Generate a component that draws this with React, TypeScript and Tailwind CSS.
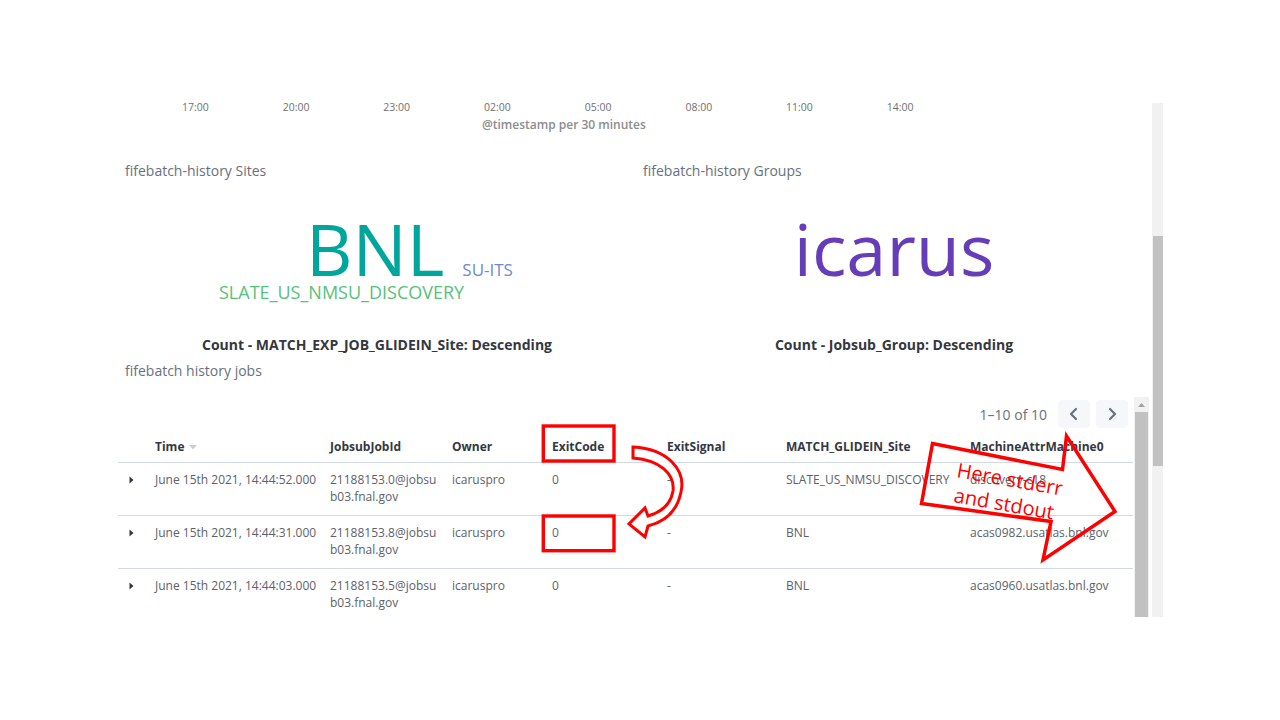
const ticks = ["17:00", "20:00", "23:00", "02:00", "05:00", "08:00", "11:00", "14:00"];

const rows = [
  {
    time: "June 15th 2021, 14:44:52.000",
    id: ["21188153.0@jobsu", "b03.fnal.gov"],
    owner: "icaruspro",
    code: "0",
    signal: "-",
    site: "SLATE_US_NMSU_DISCOVERY",
    machine: "discovery-c18",
  },
  {
    time: "June 15th 2021, 14:44:31.000",
    id: ["21188153.8@jobsu", "b03.fnal.gov"],
    owner: "icaruspro",
    code: "0",
    signal: "-",
    site: "BNL",
    machine: "acas0982.usatlas.bnl.gov",
  },
  {
    time: "June 15th 2021, 14:44:03.000",
    id: ["21188153.5@jobsu", "b03.fnal.gov"],
    owner: "icaruspro",
    code: "0",
    signal: "-",
    site: "BNL",
    machine: "acas0960.usatlas.bnl.gov",
  },
];

function Chevron({ dir }: { dir: "left" | "right" }) {
  return (
    <svg width="12" height="14" viewBox="0 0 12 14" fill="none">
      <path
        d={dir === "left" ? "M8 2 L3 7 L8 12" : "M4 2 L9 7 L4 12"}
        stroke="#69707d"
        strokeWidth="2.2"
        strokeLinecap="round"
        strokeLinejoin="round"
      />
    </svg>
  );
}

function Annotations() {
  return (
    <svg
      className="pointer-events-none absolute inset-0"
      width="1280"
      height="720"
      viewBox="0 0 1280 720"
    >
      {/* boxes around the exit codes */}
      <rect x="543.3" y="426" width="70.7" height="35" fill="none" stroke="#ff0000" strokeWidth="3.4" />
      <rect x="543.3" y="516" width="70.7" height="34.7" fill="none" stroke="#ff0000" strokeWidth="3.4" />

      {/* curved arrow from header to value */}
      <path
        d="M633 447 C668 449 686 470 681 492 C677 512 664 522 648 526 L645 537 L629 524 L645 508 L648 516 C662 512 671 503 673 491 C675 474 660 460 633 458 Z"
        fill="#ffffff"
        stroke="#ff0000"
        strokeWidth="3"
        strokeLinejoin="miter"
      />

      {/* big block arrow */}
      <polygon
        points="932.5,443.5 1062.5,469.5 1066.5,436 1115,511.5 1043,560 1051,521.5 921.5,503.5"
        fill="none"
        stroke="#ff0000"
        strokeWidth="3.5"
        strokeLinejoin="miter"
      />
      <g fill="#ff0000" fontFamily="'Open Sans', sans-serif" fontSize="20">
        <text x="956" y="477" transform="rotate(10 956 477)">Here stderr</text>
        <text x="953" y="502" transform="rotate(10 953 502)">and stdout</text>
      </g>
    </svg>
  );
}

export default function App() {
  return (
    <div className="relative h-[720px] w-[1280px] overflow-hidden bg-white font-['Open_Sans',sans-serif]">
      <div className="flex pl-[118px] pt-[97px]">
        <div className="h-[520px] w-[1034px] overflow-hidden">
          {/* histogram x axis */}
          <div className="flex h-[20px] pl-[27px] text-[10.5px] leading-[20px] text-[#707070]">
            {ticks.map((t) => (
              <div key={t} className="w-[100.7px] text-center">
                {t}
              </div>
            ))}
          </div>
          <div className="h-[16px] pl-[364px] text-[12px] font-semibold leading-[16px] text-[#8c8c8c]">
            @timestamp per 30 minutes
          </div>

          {/* tag clouds */}
          <div className="mt-[28px] flex">
            <section className="w-[518px]">
              <h3 className="pl-[7px] text-[14px] leading-[20px] text-[#69707d]">fifebatch-history Sites</h3>
              <div className="mt-[35px] flex items-baseline pl-[188px]">
                <span className="text-[72px] leading-[64px] text-[#00a69b]">BNL</span>
                <span className="ml-[18px] text-[17px] leading-[20px] text-[#6f87d8]">SU-ITS</span>
              </div>
              <div className="mt-[2px] pl-[101px] text-[18px] leading-[20px] text-[#57c17b]">
                SLATE_US_NMSU_DISCOVERY
              </div>
              <div className="mt-[33px] text-center text-[14px] font-bold leading-[20px] text-[#343741]">
                Count - MATCH_EXP_JOB_GLIDEIN_Site: Descending
              </div>
            </section>
            <section className="w-[516px]">
              <h3 className="pl-[7px] text-[14px] leading-[20px] text-[#69707d]">fifebatch-history Groups</h3>
              <div className="mt-[35px] text-center text-[72px] leading-[64px] text-[#663db8]">icarus</div>
              <div className="h-[22px]" />
              <div className="mt-[33px] text-center text-[14px] font-bold leading-[20px] text-[#343741]">
                Count - Jobsub_Group: Descending
              </div>
            </section>
          </div>

          <h3 className="mt-[6px] pl-[7px] text-[14px] leading-[20px] text-[#69707d]">fifebatch history jobs</h3>

          {/* saved search table */}
          <div className="mt-[16px] flex h-[220px]">
            <div className="w-[1015px] overflow-hidden">
              <div className="mt-[3px] flex h-[28px] items-center justify-end pr-[5px]">
                <span className="mr-[11px] text-[14px] text-[#69707d]">1–10 of 10</span>
                <button className="flex h-[28px] w-[32px] items-center justify-center rounded bg-[#f5f7fa]">
                  <Chevron dir="left" />
                </button>
                <button className="ml-[6px] flex h-[28px] w-[32px] items-center justify-center rounded bg-[#f5f7fa]">
                  <Chevron dir="right" />
                </button>
              </div>

              <div className="flex h-[35px] items-center border-b border-[#d3dae6] pt-[3px] text-[12px] font-bold text-[#343741]">
                <div className="w-[29px]" />
                <div className="flex w-[175px] items-center px-2">
                  Time
                  <svg className="ml-[5px] mt-[2px]" width="8" height="5" viewBox="0 0 8 5">
                    <path d="M0 0 L8 0 L4 4.5 Z" fill="#c9ced6" />
                  </svg>
                </div>
                <div className="w-[122px] px-2">JobsubJobId</div>
                <div className="w-[100px] px-2">Owner</div>
                <div className="w-[115px] px-2">ExitCode</div>
                <div className="w-[119px] px-2">ExitSignal</div>
                <div className="w-[184px] px-2">MATCH_GLIDEIN_Site</div>
                <div className="w-[171px] px-2">MachineAttrMachine0</div>
              </div>

              {rows.map((r) => (
                <div
                  key={r.time}
                  className="flex border-b border-[#d3dae6] pb-[10px] pt-[8px] text-[12px] leading-[17px] text-[#5c616b]"
                >
                  <div className="w-[29px] pl-[11px] pt-[5px]">
                    <svg width="5" height="8" viewBox="0 0 5 8">
                      <path d="M0.5 0.5 L4.5 4 L0.5 7.5 Z" fill="#343741" />
                    </svg>
                  </div>
                  <div className="w-[175px] whitespace-nowrap px-2">{r.time}</div>
                  <div className="w-[122px] px-2">
                    <div>{r.id[0]}</div>
                    <div>{r.id[1]}</div>
                  </div>
                  <div className="w-[100px] px-2">{r.owner}</div>
                  <div className="w-[115px] px-2">{r.code}</div>
                  <div className="w-[119px] px-2">{r.signal}</div>
                  <div className="w-[184px] whitespace-nowrap px-2">{r.site}</div>
                  <div className="w-[171px] whitespace-nowrap px-2">{r.machine}</div>
                </div>
              ))}
            </div>

            {/* table scrollbar */}
            <div className="ml-[1px] flex h-[220px] w-[15px] flex-col bg-[#f1f1f1]">
              <div className="flex h-[15px] items-center justify-center">
                <svg width="7" height="4" viewBox="0 0 7 4">
                  <path d="M0 4 L3.5 0 L7 4 Z" fill="#a3a3a3" />
                </svg>
              </div>
              <div className="mx-[1px] flex-1 bg-[#c1c1c1]" />
            </div>
          </div>
        </div>

        {/* page scrollbar */}
        <div className="mt-[6px] flex h-[514px] w-[11px] flex-col bg-[#f1f1f1]">
          <div className="h-[133px]" />
          <div className="ml-[1px] h-[230px] bg-[#c1c1c1]" />
        </div>
      </div>

      <Annotations />
    </div>
  );
}
